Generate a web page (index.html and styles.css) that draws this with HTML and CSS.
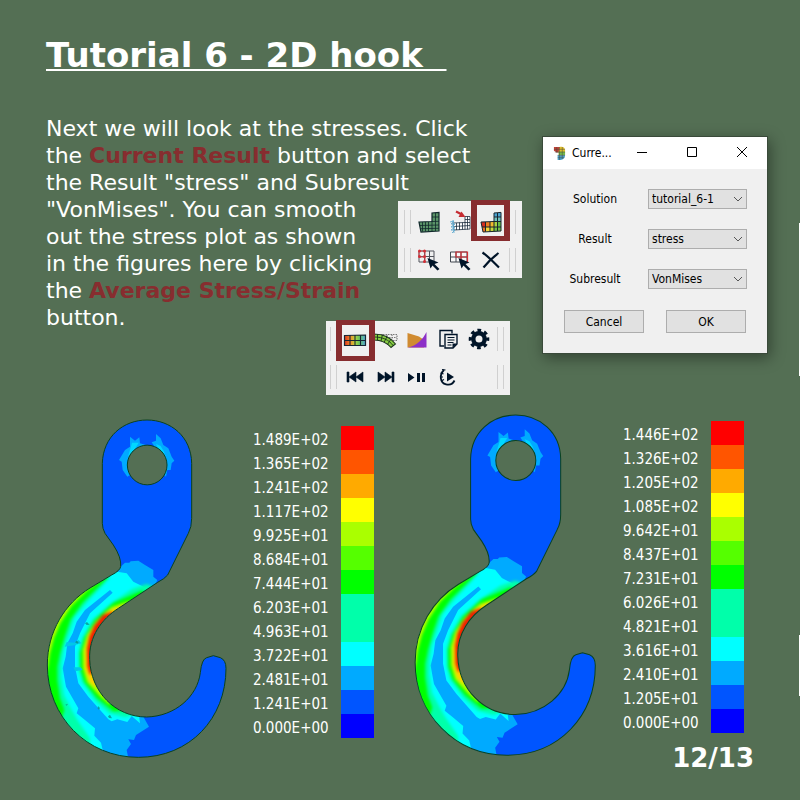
FILE: index.html
```
<!DOCTYPE html>
<html lang="en">
<head>
<meta charset="utf-8">
<title>Tutorial 6 - 2D hook</title>
<link rel="stylesheet" href="styles.css">
</head>
<body>
<main class="slide">
  <h1 class="title">Tutorial 6 - 2D hook&nbsp;&nbsp;</h1>

  <section class="lesson">
    <div class="lesson-text">
      <p>Next we will look at the stresses. Click<br>
      the <strong>Current Result</strong> button and select<br>
      the Result "stress" and Subresult<br>
      "VonMises". You can smooth<br>
      out the stress plot as shown<br>
      in the figures here by clicking<br>
      the <strong>Average Stress/Strain</strong><br>
      button.</p>

      <div class="toolbar toolbar-model">
        <div class="tool-row">
          <span class="grip"></span>
          <div class="tools">
            <button class="tool" aria-label="Mesh">
              <svg viewBox="0 0 24 24"><path d="M2 12 15 11.500V3l7-.6V21L4 22Z" fill="#5a9468" stroke="#10282b" stroke-width="1.200"/><path d="M3 15.500 22 15M3.500 18.700 22 18.300M15 11.500l7-.2M15 7h7M18.500 3v18M15 11v10M11.500 12v9.500M8.500 12v9.500M5.500 12v9.500" fill="none" stroke="#10282b" stroke-width=".8"/></svg>
            </button>
            <button class="tool" aria-label="Loads and constraints">
              <svg viewBox="0 0 24 24"><path d="M5 13 17 12.500V6.500h5V19L6 20ZM5.500 16.500 22 15.500M17 9.500h5M17 12.500h5M19.500 6.500v13M17 12v7.500M14.500 12.500v7M11.500 12.500V20M8.500 13v7" fill="#fff" stroke="#1c2c3c" stroke-width=".8"/><path d="M8 1.500 14 4.500" stroke="#c52c32" stroke-width="2.200"/><path d="m10.500 7 3-5.500 4 5.500Z" fill="#c52c32"/><path d="m2 12 4-1-3 3h4l-4 3h4l-4 3h4l-3 3M5 10l1 13" fill="none" stroke="#62acd0" stroke-width=".9"/></svg>
            </button>
            <button class="tool tool-marked" aria-label="Current Result">
              <svg viewBox="0 0 24 24"><path d="M2 12h4l.5 5H3Z" fill="#d32b20"/><path d="M6 12h5v5H6Z" fill="#ee7d20"/><path d="M11 12h4v5h-4Z" fill="#f2b92d"/><path d="M15 11.500h3.500V17H15Z" fill="#a9d343"/><path d="M18.500 11.500H22V17h-3.500Z" fill="#64bd48"/><path d="M3 17h4v5H4Z" fill="#e97123"/><path d="M7 17h4v4.700H7Z" fill="#f1d336"/><path d="M11 17h4v4.500h-4Z" fill="#c5d83a"/><path d="M15 17h7v4l-7 .4Z" fill="#72c346"/><path d="M15 3h7v4.500h-7Z" fill="#4aa1cf"/><path d="M15 7.500h7v4h-7Z" fill="#70c2bd"/><path d="M2 12 15 11.500V3l7-.6V21L4 22ZM3 17h19M15 11.500h7M15 7h7M18.500 3v18M15 11v10M11 12v9.500M6.500 12v9.500" fill="none" stroke="#17252d" stroke-width="1"/></svg>
            </button>
          </div>
          <span class="grip"></span>
        </div>
        <div class="tool-row">
          <span class="grip"></span>
          <div class="tools">
            <button class="tool" aria-label="Select nodes">
              <svg viewBox="0 0 24 24"><path d="M2 3h15v11H2ZM2 8.500h15M7.500 3v11M12.500 3v11" fill="none" stroke="#52545c"/><path d="M2 3h6v6H2Zm6 6v5" fill="none" stroke="#c84a50"/><g fill="#d32f36"><circle cx="2.500" cy="3" r="1.500"/><circle cx="7.500" cy="3" r="1.500"/><circle cx="2.500" cy="8.500" r="1.500"/><circle cx="7.500" cy="8.500" r="1.500"/><circle cx="7.500" cy="13.500" r="1.500"/></g><path d="m10.500 10 11 4.500-4 1.500 5 5-2 1.500-5-5-2 3Z" fill="#001428"/></svg>
            </button>
            <button class="tool" aria-label="Select elements">
              <svg viewBox="0 0 24 24"><path d="M2.500 4h16.500v10H2.500ZM2.500 9H19M8 4v10M13 4v10" fill="#f8f8f8" stroke="#41464f"/><path d="M8 4h11.500v10H13V9H8ZM13 4v10M13 9h6.500" fill="none" stroke="#d32f36" stroke-width="1.200"/><path d="m10.500 10 11 4.500-4 1.500 5 5-2 1.500-5-5-2 3Z" fill="#001428"/></svg>
            </button>
            <button class="tool" aria-label="Clear selection">
              <svg viewBox="0 0 24 24"><path d="M3.500 4.500c6 4 10 9 16.500 15M19.500 5C13 10 8 15 4.500 19.500" fill="none" stroke="#001428" stroke-width="2.200"/></svg>
            </button>
          </div>
          <span class="grip"></span>
        </div>
      </div>

      <div class="toolbar toolbar-result">
        <div class="tool-row">
          <span class="grip"></span>
          <div class="tools">
            <button class="tool tool-marked" aria-label="Average Stress/Strain">
              <svg viewBox="0 0 24 24"><defs><linearGradient id="beam"><stop offset="0" stop-color="#d83520"/><stop offset=".3" stop-color="#f0912a"/><stop offset=".5" stop-color="#b5d63e"/><stop offset=".7" stop-color="#68c45b"/><stop offset="1" stop-color="#58a8d8"/></linearGradient></defs><path d="M1.500 8.500 22.500 8v10.500h-21Z" fill="url(#beam)" stroke="#172532" stroke-width="1.200"/><path d="M1.500 13.500h21M7 8v10.500M12 8v10.500M17.500 8v10.500" stroke="#172532" stroke-width="1.100"/></svg>
            </button>
            <button class="tool" aria-label="Deformed shape">
              <svg viewBox="0 0 24 24"><path d="M4 7.500h19v6H4M8 7.500v6M13 7.500v6M18 7.500v6M5 10.500h18" fill="none" stroke="#777" stroke-width="1.100" stroke-dasharray="1.500 1"/><path d="M0 7C10 7 17 11 21.500 17L17 20.500C13 16 8 13 0 13Z" fill="#87cb42" stroke="#1b331c" stroke-width="1.100"/><path d="M0 10c9 0 15 3 19 8.500M3.500 7v6M8.500 7.500 7 14M13 9.500 10 15.500M17 12l-3.500 5.500" fill="none" stroke="#1b331c" stroke-width=".9"/></svg>
            </button>
            <button class="tool" aria-label="Plot options">
              <svg viewBox="0 0 24 24"><path d="M2.500 6 14 9.500 19 13v7.500H2.500Z" fill="#d08b30"/><path d="M21.500 5v15.500h-19C12 19 18 12 21.500 5Z" fill="#8c30c8"/></svg>
            </button>
            <button class="tool" aria-label="Copy">
              <svg viewBox="0 0 24 24"><path d="M8 19H4V3.500h12v3" fill="none" stroke="#001428" stroke-width="1.400"/><path d="M9 7.500h12v9.500l-4 4H9Z" fill="#f0f0f0" stroke="#001428" stroke-width="1.400"/><path d="M11.500 10.500h7M11.500 13h7M11.500 15.500h6M11.500 18h4" stroke="#001428"/><path d="M16.500 21v-4.500H21Z" fill="#001428"/></svg>
            </button>
            <button class="tool" aria-label="Settings">
              <svg viewBox="0 0 24 24"><circle cx="12" cy="12" r="5.700" fill="none" stroke="#001428" stroke-width="4.400"/><circle cx="12" cy="12" r="8.700" fill="none" stroke="#001428" stroke-width="3.200" stroke-dasharray="3.630 3.200" stroke-dashoffset="1.800"/></svg>
            </button>
          </div>
          <span class="grip"></span>
        </div>
        <div class="tool-row">
          <span class="grip"></span>
          <div class="tools">
            <button class="tool" aria-label="Previous step">
              <svg viewBox="0 0 24 24"><path d="M4 7h2v10H4ZM13 7v10l-7-5ZM20 7v10l-7-5Z" fill="#001428" stroke="#001428" stroke-width=".6"/></svg>
            </button>
            <button class="tool" aria-label="Next step">
              <svg viewBox="0 0 24 24"><path d="M18 7h2v10h-2ZM11 7v10l7-5ZM4 7v10l7-5Z" fill="#001428" stroke="#001428" stroke-width=".6"/></svg>
            </button>
            <button class="tool" aria-label="Play or pause">
              <svg viewBox="0 0 24 24"><path d="m3 8 6.500 4.500L3 17ZM12 8h3v9h-3ZM17 8h3v9h-3Z" fill="#001428"/></svg>
            </button>
            <button class="tool" aria-label="Animation speed">
              <svg viewBox="0 0 24 24"><path d="M8 5C3 9.500 4 18 10 19.300c4 1 7-.6 8.500-3.800" fill="none" stroke="#001428" stroke-width="1.800"/><path d="M6 4.500 9.500 5M4.500 8l3 .8M4 12h3M5 16l3-1.500" stroke="#001428" stroke-width="1.200"/><path d="M11 7.500 18 12l-7 4.500Z" fill="#001428"/></svg>
            </button>
          </div>
          <span class="grip"></span>
        </div>
      </div>
    </div>

    <form class="dialog" aria-label="Current Result" onsubmit="return false">
      <div class="dialog-bar">
        <svg class="dialog-icon" viewBox="0 0 14 16"><path d="M1 1h7v6H4L1 5Z" fill="#bd4338"/><path d="M7 1c4-1 6 1 6 4v2H6Z" fill="#dfbd2b"/><path d="M6 6h7v4H6Z" fill="#75b84b"/><path d="M5 10h8c0 3-2 5-5 5H5Z" fill="#479dc5"/><path d="M1 3.500h12M2 6.500h11M5 10h8M5 12.500h7M4 1v6M7 1v14M10 1v13" stroke="#49453b" stroke-width=".5"/></svg>
        <span class="dialog-name">Curre...</span>
        <button type="button" class="win" aria-label="Minimize"><svg viewBox="0 0 12 12"><path d="M1 5.500h10"/></svg></button>
        <button type="button" class="win" aria-label="Maximize"><svg viewBox="0 0 12 12"><path d="M1.500.5h9v9h-9Z"/></svg></button>
        <button type="button" class="win" aria-label="Close"><svg viewBox="0 0 12 12"><path d="m1 0 10 10M11 0 1 10"/></svg></button>
      </div>
      <div class="dialog-body">
        <div class="field">
          <label for="solution">Solution</label>
          <span class="picker"><select id="solution"><option>tutorial_6-1</option></select><svg viewBox="0 0 10 10"><path d="m1 3 4 4 4-4"/></svg></span>
        </div>
        <div class="field">
          <label for="result">Result</label>
          <span class="picker"><select id="result"><option>stress</option></select><svg viewBox="0 0 10 10"><path d="m1 3 4 4 4-4"/></svg></span>
        </div>
        <div class="field">
          <label for="subresult">Subresult</label>
          <span class="picker"><select id="subresult"><option>VonMises</option></select><svg viewBox="0 0 10 10"><path d="m1 3 4 4 4-4"/></svg></span>
        </div>
        <div class="actions">
          <button type="button">Cancel</button>
          <button type="button">OK</button>
        </div>
      </div>
    </form>
  </section>

  <section class="plots">
    <svg class="hook hook-raw" viewBox="0 -510 600 1080" role="img" aria-label="Hook stress plot">
      <defs>
        <path id="outline" clip-rule="evenodd" fill-rule="evenodd" d="M217 -350C219 -430 280 -480 351 -480S484 -430 485 -350V-185Q485 -158 475 -140L413 -15Q404 -4 383 7L265 85C215 117 176 170 179 238C182 335 255 411 350 411C435 409 502 350 511 278Q515 237 530 233L550 227L571 233Q588 240 588 265C588 415 480 532 325 532C170 532 52 410 52 255C52 155 105 70 180 24L245 -15Q270 -28 272 -40Q275 -67 250 -105L225 -140Q217 -155 217 -170ZM292 -345a59.500 59.500 0 1 0 119 0a59.500 59.500 0 1 0 -119 0Z"/>
        <clipPath id="hook-clip"><use href="#outline"/></clipPath>
        <filter id="soft" x="-10%" y="-10%" width="120%" height="120%" color-interpolation-filters="sRGB"><feGaussianBlur stdDeviation="5"/></filter>
        <filter id="edge" x="-10%" y="-10%" width="120%" height="120%" color-interpolation-filters="sRGB"><feGaussianBlur stdDeviation="1.500"/></filter>
        <g id="contours">
          <path fill="#05f" d="M0-510h600V570H0Z"/>
          <g filter="url(#edge)">
            <path fill="#0af" d="M250-60 272-40 285-52 298-52 302-56 325-58 345-45 370-30 370-10 382 0 378 10 386 40 340 80 300 250 340 410 357 440 318 465 312 480 295 478 303 492 290 510 300 560H0V-40Z"/>
            <path fill="#0af" d="M300-430 315-418 328-428 330-410 350-404 350-345 292-310 278-330 275-355 267-360 285-390 300-400ZM378-438 392-425 400-405 415-395 425-370 433-358 425-350 422-330 412-330 408-310 370-345 365-390 372-403 365-413 378-418Z"/>
            <path fill="#00d8ff" d="M306-412 326-412 310-385 294-370 300-390ZM378-408 392-402 402-385 407-370 390-380Z"/>
            <path fill="#0ff" d="M240-30 262-25 290-20 310 5 350 25 420 50 300 200 330 430 305 408 292 426 262 418 245 424 235 418 175 350 145 310 135 260 135 200 150 160 180 100 248 38 240 30 165 90 140 125 128 160 112 190 107 230 98 265 108 320 145 385 140 400 165 420 195 445 193 467 213 488 225 540H0V-30Z"/>
          </g>
          <g filter="url(#soft)">
            <path fill="#00ffaa" d="M242-10 215 20 170 68 134 112 116 165 102 205 95 250 94 290 102 345 120 380 142 420 180 475 180 560H-20V-60ZM350 12 305 28 245 68 188 118 157 172 145 215 146 270 156 307 196 362 238 400 285 412 320 400V200L450 50Z"/>
            <path fill="#0f0" d="M236-10 208 18 158 68 122 118 104 170 90 220 82 260 82 300 90 355 103 390 90 430-20 430V-60ZM335 32 250 68 194 120 163 173 150 220 151 268 163 306 200 353 250 394 300 390V200L400 60Z"/>
            <path fill="#b4ff00" d="M213 0 170 32 125 77 91 130 72 175 60 220 55 255 48 290-20 290V-60ZM296 64 245 81 200 122 171 165 158 210 159 264 171 306 209 348 240 375 280 200 350 80Z"/>
            <path fill="#ffd000" d="M280 74 228 96 191 136 174 172 166 210 166 266 178 303 196 320 260 240 300 100Z"/>
            <path fill="#f02000" d="M248 95 218 105 193 137 178 170 171 205 172 260 180 285 230 230 260 120Z"/>
          </g>
        </g>
      </defs>
      <g clip-path="url(#hook-clip)">
        <use href="#contours"/>
        <g filter="url(#edge)">
          <path fill="#00c8e8" d="m110 186 22 2 14-8 8 10-22 6-28 4ZM130 262l22 0 6 8-22 4Z"/>
          <path fill="#08867f" opacity=".7" d="m165 130 6-4 8 8-9 1ZM135 187l5-5 6 5-4 4ZM204 378l6 6-3 5-4-3ZM234 409l6-5 6 11-9-1ZM106 374l8-3-4 6Z"/>
        </g>
      </g>
      <use href="#outline" fill="none" stroke="#0b4320" stroke-width="3"/>
    </svg>

    <div class="legend legend-raw">
      <ul class="values"><li>1.489E+02</li><li>1.365E+02</li><li>1.241E+02</li><li>1.117E+02</li><li>9.925E+01</li><li>8.684E+01</li><li>7.444E+01</li><li>6.203E+01</li><li>4.963E+01</li><li>3.722E+01</li><li>2.481E+01</li><li>1.241E+01</li><li>0.000E+00</li></ul>
      <div class="scale"><i class="c12"></i><i class="c11"></i><i class="c10"></i><i class="c9"></i><i class="c8"></i><i class="c7"></i><i class="c6"></i><i class="c5"></i><i class="c4"></i><i class="c3"></i><i class="c2"></i><i class="c1"></i><i class="c0"></i></div>
    </div>

    <svg class="hook hook-smooth" viewBox="0 -510 600 1080" role="img" aria-label="Hook averaged stress plot">
      <g clip-path="url(#hook-clip)"><use href="#contours"/></g>
      <use href="#outline" fill="none" stroke="#0b4320" stroke-width="3"/>
    </svg>

    <div class="legend legend-smooth">
      <ul class="values"><li>1.446E+02</li><li>1.326E+02</li><li>1.205E+02</li><li>1.085E+02</li><li>9.642E+01</li><li>8.437E+01</li><li>7.231E+01</li><li>6.026E+01</li><li>4.821E+01</li><li>3.616E+01</li><li>2.410E+01</li><li>1.205E+01</li><li>0.000E+00</li></ul>
      <div class="scale"><i class="c12"></i><i class="c11"></i><i class="c10"></i><i class="c9"></i><i class="c8"></i><i class="c7"></i><i class="c6"></i><i class="c5"></i><i class="c4"></i><i class="c3"></i><i class="c2"></i><i class="c1"></i><i class="c0"></i></div>
    </div>
  </section>

  <footer class="page-number">12/13</footer>
</main>
</body>
</html>
```
FILE: styles.css
```
* { box-sizing: border-box; }

body {
  margin: 0;
  background: #546f54;
  color: #fff;
  font-family: "DejaVu Sans", sans-serif;
}

.slide {
  position: relative;
  min-height: 100vh;
  padding: 35px 32px 28px 46px;
}

/* edges of the neighbouring slide's panels */
.slide::before,
.slide::after {
  content: "";
  position: absolute;
  right: 0;
  width: 1px;
  background: #fff;
}
.slide::before { top: 223px; height: 153px; }
.slide::after { top: 635px; height: 61px; }

.title {
  margin: 0 0 40px;
  font-size: 34px;
  line-height: 40px;
  text-decoration: underline;
  text-decoration-thickness: 2px;
  text-underline-offset: 2px;
  text-decoration-skip-ink: none;
}

.lesson {
  display: flex;
  justify-content: space-between;
  align-items: flex-start;
}

.lesson-text {
  position: relative;
  font-size: 22px;
  line-height: 27px;
}
.lesson-text p { margin: 0; white-space: nowrap; }
.lesson-text strong { color: #872d2f; }

button { font: inherit; color: inherit; padding: 0; }

.toolbar {
  position: absolute;
  display: flex;
  flex-direction: column;
  gap: 14px;
  padding: 6px;
  background: #f0f0f0;
}
.toolbar-model { left: 352px; top: 86px; padding-top: 9px; }
.toolbar-result { left: 280px; top: 206px; padding-left: 4px; }

.tool-row { display: flex; justify-content: space-between; gap: 6px; }

.grip {
  width: 7px;
  height: 24px;
  border: solid #d0d0d0;
  border-width: 0 1px;
}

.tools { display: flex; flex: 1; gap: 7px; }

.tool {
  position: relative;
  width: 24px;
  height: 24px;
  border: 0;
  background: none;
}
.tool svg { display: block; width: 24px; height: 24px; }

.tool-marked::after {
  content: "";
  position: absolute;
  z-index: 1;
  border: solid #872d2f;
  border-width: 5px 6px;
}
.toolbar-model .tool-marked::after { inset: -10px -7px -7px -8px; }
.toolbar-result .tool-marked::after { inset: -7px -8px -10px -7px; }

.dialog {
  width: 226px;
  margin-top: 21px;
  border: 1px solid #3a4a3a;
  background: #f0f0f0;
  color: #000;
  font: 12px/16px "DejaVu Sans Condensed", "Noto Sans", sans-serif;
  box-shadow: 2px 4px 14px rgba(0, 0, 0, .4);
}

.dialog-bar {
  display: flex;
  align-items: center;
  height: 32px;
  padding-left: 10px;
  background: #fff;
}
.dialog-icon { width: 13px; height: 15px; }
.dialog-name { flex: 1; margin-left: 6px; }

.win {
  display: grid;
  place-items: center;
  width: 50px;
  height: 32px;
  border: 0;
  background: none;
}
.win svg {
  width: 12px;
  height: 12px;
  fill: none;
  stroke: #000;
}

.dialog-body { padding: 20px 20px; }

.field {
  display: grid;
  grid-template-columns: 64px 99px;
  justify-content: space-between;
  align-items: center;
  height: 20px;
  margin-bottom: 20px;
}
.field label { text-align: center; }

.picker { position: relative; display: block; }
.picker select {
  display: block;
  width: 100%;
  height: 20px;
  padding: 0 3px;
  border: 1px solid #adadad;
  border-radius: 0;
  background: #e1e1e1;
  color: inherit;
  font: inherit;
  appearance: none;
}
.picker svg {
  position: absolute;
  top: 5px;
  right: 4px;
  width: 10px;
  height: 10px;
  fill: none;
  stroke: #555;
  pointer-events: none;
}

.actions { display: flex; justify-content: space-between; padding: 1px 1px 0; }
.actions button {
  width: 80px;
  height: 23px;
  border: 1px solid #adadad;
  background: #e1e1e1;
}

.plots {
  display: flex;
  align-items: flex-start;
  gap: 23px;
  margin: 51px 0 0 -16px;
}

.hook { flex: none; }
.hook-raw { width: 200px; height: 360px; margin-top: 5px; }
.hook-smooth { width: 203px; height: 363px; }

.legend {
  display: flex;
  gap: 13px;
  font: 15px/24px "DejaVu Sans Condensed", "Noto Sans", sans-serif;
}
.legend-raw { margin-top: 21px; }
.legend-smooth { margin-top: 16px; }

.values { width: 75px; margin: 0; padding: 2px 0 0; list-style: none; }

.scale { width: 33px; }
.scale i { display: block; height: 24px; }

.c12 { background: #f00; }
.c11 { background: #f50; }
.c10 { background: #fa0; }
.c9 { background: #ff0; }
.c8 { background: #af0; }
.c7 { background: #5f0; }
.c6 { background: #0f0; }
.c5, .c4 { background: #0fa; }
.c3 { background: #0ff; }
.c2 { background: #0af; }
.c1 { background: #05f; }
.c0 { background: #00f; }

.page-number {
  margin: -27px 14px 0 0;
  font-size: 26px;
  font-weight: bold;
  line-height: 30px;
  text-align: right;
}
```
